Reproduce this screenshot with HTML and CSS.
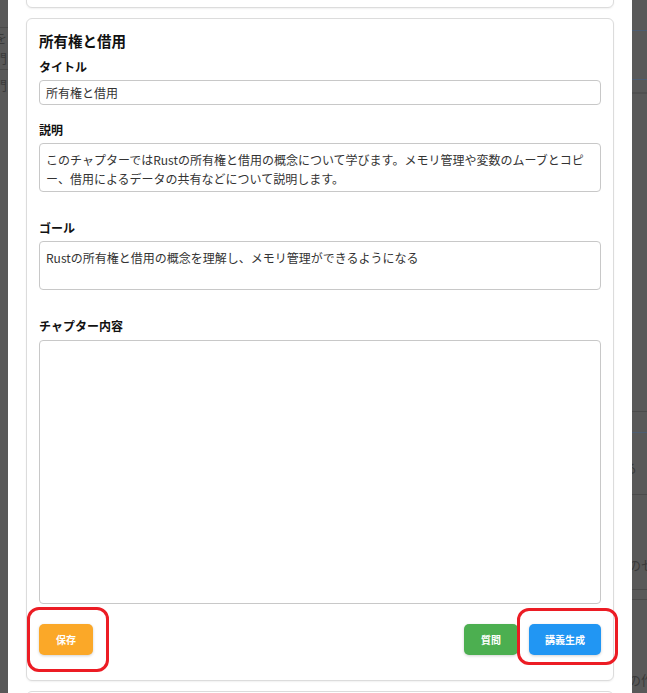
FILE: index.html
```html
<!DOCTYPE html>
<html lang="ja">
<head>
<meta charset="utf-8">
<title>チャプター編集</title>
<link rel="stylesheet" href="styles.css">
</head>
<body>
<div class="screen">
  <div class="strip strip-left">
    <div class="bg-line l1"></div>
    <div class="bg-text t1">を</div>
    <div class="bg-text t2">門</div>
    <div class="bg-line l2"></div>
    <div class="bg-text t3">門</div>
  </div>

  <div class="modal">
    <div class="card card-prev"></div>

    <div class="card card-main">
      <h2 class="chapter-title">所有権と借用</h2>

      <div class="field field-input">
        <label class="field-label">タイトル</label>
        <input class="text-input" type="text" value="所有権と借用">
      </div>

      <div class="field field-area">
        <label class="field-label">説明</label>
        <textarea class="text-area area-short">このチャプターではRustの所有権と借用の概念について学びます。メモリ管理や変数のムーブとコピー、借用によるデータの共有などについて説明します。</textarea>
      </div>

      <div class="field field-area">
        <label class="field-label">ゴール</label>
        <textarea class="text-area area-short">Rustの所有権と借用の概念を理解し、メモリ管理ができるようになる</textarea>
      </div>

      <div class="field">
        <label class="field-label">チャプター内容</label>
        <textarea class="text-area area-long"></textarea>
      </div>

      <div class="actions">
        <div class="mark mark-left">
          <button class="btn btn-save">保存</button>
        </div>
        <div class="actions-right">
          <button class="btn btn-ask">質問</button>
          <div class="mark mark-right">
            <button class="btn btn-gen">講義生成</button>
          </div>
        </div>
      </div>
    </div>

    <div class="card card-next"></div>
  </div>

  <div class="strip strip-right">
    <div class="bg-line blue r1"></div>
    <div class="bg-line blue r2"></div>
    <div class="bg-line gray r3"></div>
    <div class="bg-line gray r4"></div>
    <div class="bg-line blue r5"></div>
    <div class="bg-text rt1">る</div>
    <div class="bg-line gray r6"></div>
    <div class="bg-text rt2">のセ</div>
    <div class="bg-line gray r7"></div>
    <div class="bg-line gray r8"></div>
    <div class="bg-text rt3">の作</div>
  </div>
</div>
</body>
</html>
```

FILE: styles.css
```css
*, *::before, *::after { box-sizing: border-box; }

html, body {
  margin: 0;
  padding: 0;
  height: 100%;
  overflow: hidden;
}

body {
  background: #595959;
  font-family: "Noto Sans CJK JP", "Noto Sans", sans-serif;
  color: #222;
}

.screen {
  display: flex;
  height: 693px;
}

/* dimmed page behind the modal */
.strip {
  display: flex;
  flex-direction: column;
  overflow: hidden;
  color: #3a3a3a;
}
.strip-left { width: 8px; }
.strip-right { width: 15px; }

.bg-line { height: 1px; background: #4b4b4b; flex: none; }
.bg-line.blue { background: #4d5d72; }
.bg-text {
  font-size: 13px;
  line-height: 16px;
  white-space: nowrap;
  flex: none;
}
.strip-left .bg-text { margin-left: -6px; }
.strip-right .bg-text { margin-left: -4px; }

.l1 { margin-top: 27px; }
.t1 { margin-top: 2px; }
.t2 { margin-top: 4px; }
.l2 { margin-top: 3px; }
.t3 { margin-top: 7px; }

.r1 { margin-top: 30px; }
.r2 { margin-top: 48px; }
.r3 { margin-top: 12px; height: 2px; background: #505050; }
.r4 { margin-top: 317px; }
.r5 { margin-top: 20px; }
.rt1 { margin-top: 27px; margin-left: -8px !important; }
.r6 { margin-top: 18px; }
.rt2 { margin-top: 62px; margin-left: -4px !important; }
.r7 { margin-top: 16px; }
.r8 { margin-top: 9px; }
.rt3 { margin-top: 72px; margin-left: -4px !important; }

/* modal */
.modal {
  width: 624px;
  flex: none;
  background: #fff;
  padding: 0 18px;
  overflow: hidden;
}

.card {
  background: #fff;
  border: 1px solid #dcdcdc;
  border-radius: 6px;
  box-shadow: 0 1px 2px rgba(0,0,0,0.06);
}

.card-prev {
  height: 40px;
  margin-top: -32px;
}

.card-main {
  margin-top: 10px;
  padding: 12px 12px 25px;
}

.card-next {
  height: 40px;
  margin-top: 10px;
}

.chapter-title {
  margin: 0 0 8px;
  font-size: 14.5px;
  line-height: 19px;
  font-weight: 700;
  color: #111;
}

.field { display: flex; flex-direction: column; }
.field-input { margin-bottom: 16px; }
.field-area { margin-bottom: 27px; }

.field-label {
  font-size: 12px;
  line-height: 18px;
  font-weight: 700;
  color: #111;
  margin-bottom: 4px;
}

.text-input,
.text-area {
  font-family: "Noto Sans CJK JP", "Noto Sans", sans-serif;
  font-size: 12px;
  color: #333;
  border: 1px solid #c8c8c8;
  border-radius: 4px;
  background: #fff;
  width: 100%;
  margin: 0;
}

.text-input {
  height: 25px;
  padding: 0 6px;
  line-height: 23px;
}

.text-area {
  display: block;
  resize: none;
  padding: 6px 6px;
  line-height: 19px;
  overflow: hidden;
}

.area-short { height: 49px; }
.area-long { height: 264px; margin-top: 1px; }

/* buttons */
.actions {
  display: flex;
  justify-content: space-between;
  align-items: center;
  margin-top: 20px;
}

.actions-right {
  display: flex;
  align-items: center;
  gap: 11px;
}

.btn {
  height: 31px;
  padding: 0 17px;
  border: none;
  border-radius: 5px;
  color: #fff;
  font-family: "Noto Sans CJK JP", "Noto Sans", sans-serif;
  font-size: 10px;
  font-weight: 700;
  box-shadow: 0 1px 3px rgba(0,0,0,0.18);
}
.btn-save { background: #fba828; }
.btn-ask { background: #4caf50; }
.btn-gen { background: #2196f3; padding: 0 16px; }

/* red annotation rectangles */
.mark { position: relative; display: flex; }
.mark::after {
  content: "";
  position: absolute;
  border: 3px solid #ec1c24;
  border-radius: 12px;
  pointer-events: none;
}
.mark-left::after {
  left: -12px; top: -17px; width: 82px; height: 65px;
}
.mark-right::after {
  left: -12px; top: -16px; width: 101px; height: 57px;
}
```
